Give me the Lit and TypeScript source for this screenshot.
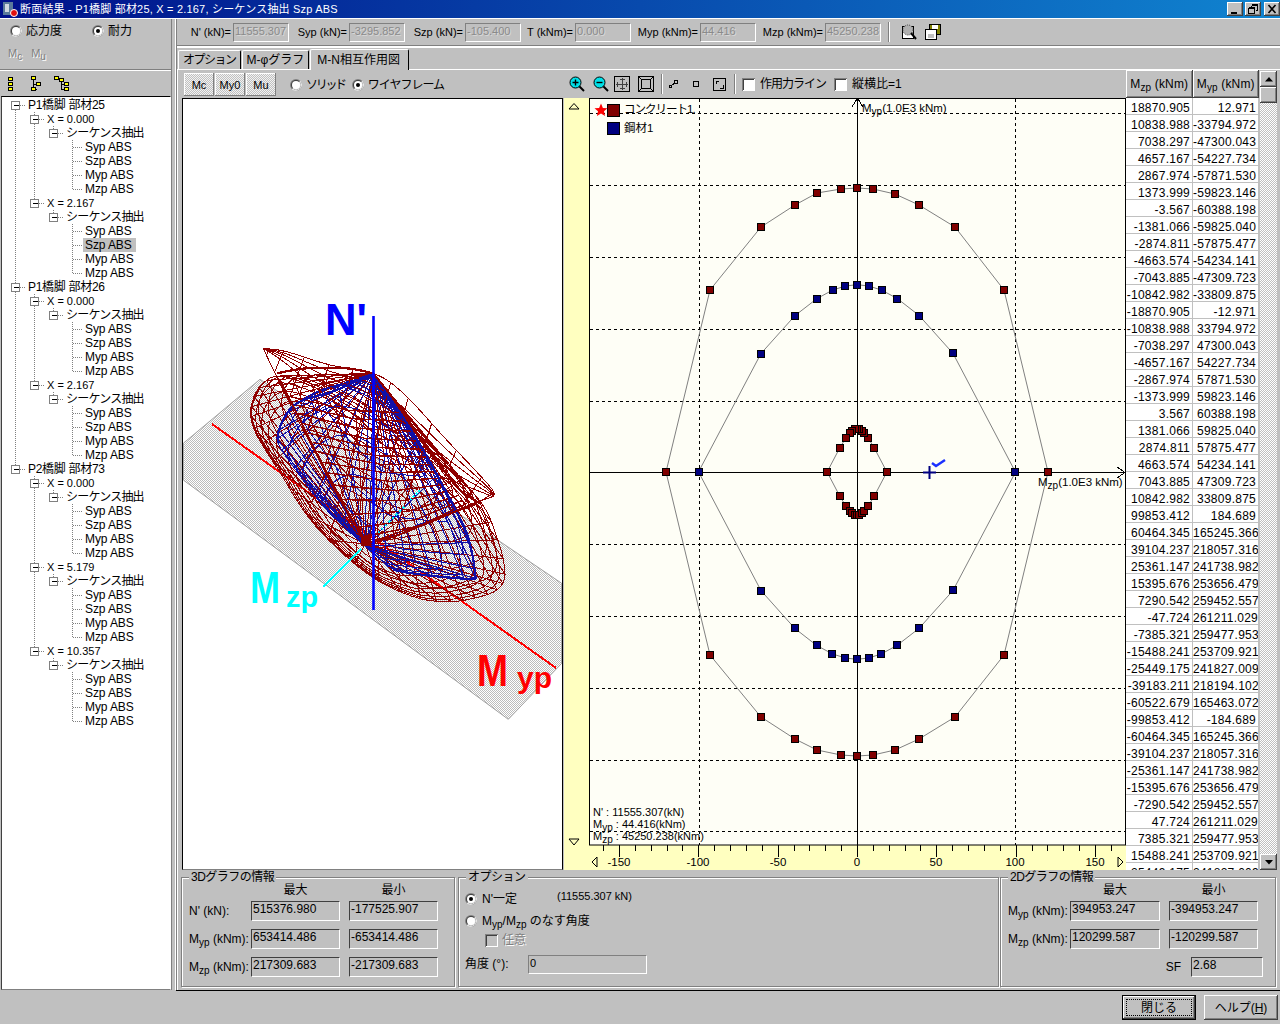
import { LitElement, html, css, svg } from "lit";
import { customElement } from "lit/decorators.js";

type Pt = [number, number];
const RAW = `18870.905 12.971
10838.988 -33794.972
7038.297 -47300.043
4657.167 -54227.734
2867.974 -57871.530
1373.999 -59823.146
-3.567 -60388.198
-1381.066 -59825.040
-2874.811 -57875.477
-4663.574 -54234.141
-7043.885 -47309.723
-10842.982 -33809.875
-18870.905 -12.971
-10838.988 33794.972
-7038.297 47300.043
-4657.167 54227.734
-2867.974 57871.530
-1373.999 59823.146
3.567 60388.198
1381.066 59825.040
2874.811 57875.477
4663.574 54234.141
7043.885 47309.723
10842.982 33809.875
99853.412 184.689
60464.345 165245.366
39104.237 218057.316
25361.147 241738.982
15395.676 253656.479
7290.542 259452.557
-47.724 261211.029
-7385.321 259477.953
-15488.241 253709.921
-25449.175 241827.009
-39183.211 218194.102
-60522.679 165463.072
-99853.412 -184.689
-60464.345 165245.366
-39104.237 218057.316
-25361.147 241738.982
-15395.676 253656.479
-7290.542 259452.557
47.724 261211.029
7385.321 259477.953
15488.241 253709.921
25449.175 241827.009`;
const ROWS = RAW.split("\n").map((l) => l.split(" "));
const plot = (r: string[]): Pt => [857 + (parseFloat(r[0]) / 1000) * 1.587, 472 + (parseFloat(r[1]) / 1000) * 0.717];
const INNER: Pt[] = ROWS.slice(0, 24).map(plot);
const half: Pt[] = ROWS.slice(24, 36).map(plot);
const STEEL: Pt[] = [...half, ...half.map(([x, y]) => [1714 - x, 944 - y] as Pt)];
const OUTER: Pt[] = [[1048, 472], [1004, 290], [955, 227], [919, 205], [895, 194], [873, 189], [857, 188], [841, 189], [817, 193], [795, 205], [761, 227], [710, 290], [666, 472], [710, 655], [761, 717], [795, 739], [817, 750], [841, 755], [857, 756], [873, 755], [895, 750], [919, 739], [955, 717], [1004, 655]];

const Z = ([x, y]: Pt): Pt => [180 + x / 3, 290 + y / 3];
const d = (pts: Pt[], closed = false) => "M" + pts.map(([x, y]) => `${x.toFixed(1)} ${y.toFixed(1)}`).join("L") + (closed ? "Z" : "");

function spline(ctrl: Pt[], n: number, closed: boolean): Pt[] {
  const out: Pt[] = [];
  const m = ctrl.length;
  const segs = closed ? m : m - 1;
  const get = (i: number) => (closed ? ctrl[(i + m) % m] : ctrl[Math.max(0, Math.min(m - 1, i))]);
  for (let k = 0; k < n; k++) {
    const f = (k / (closed ? n : n - 1)) * segs;
    const i = Math.min(Math.floor(f), segs - 1);
    const t = f - i;
    const p0 = get(i - 1), p1 = get(i), p2 = get(i + 1), p3 = get(i + 2);
    const c = (a: number, b: number, e: number, g: number) =>
      0.5 * (2 * b + (e - a) * t + (2 * a - 5 * b + 4 * e - g) * t * t + (3 * b - a - 3 * e + g) * t * t * t);
    out.push([c(p0[0], p1[0], p2[0], p3[0]), c(p0[1], p1[1], p2[1], p3[1])]);
  }
  return out;
}

// two cones sharing one ring: apex -> ring -> pinch
function bag(apex: Pt, pinch: Pt, ringCtrl: Pt[], up: number[], down: number[], mers: number): { lat: string; mer: string } {
  const ring = spline(ringCtrl, mers * 4, true);
  const mix = (a: Pt, b: Pt, u: number): Pt => Z([a[0] + (b[0] - a[0]) * u, a[1] + (b[1] - a[1]) * u]);
  let lat = "", mer = "";
  const rowAt = (o: Pt, u: number) => {
    const p: Pt[] = [];
    for (let k = 0; k < ring.length; k += 2) p.push(mix(o, ring[k], u));
    lat += d(p, true);
  };
  up.forEach((u) => rowAt(apex, u));
  down.forEach((u) => rowAt(pinch, u));
  rowAt(pinch, 1);
  for (let k = 0; k < mers; k++) {
    mer += d([Z(apex), Z(ring[k * 4]), Z(pinch)]);
  }
  return { lat, mer };
}

const MAIN_RING: Pt[] = [[215, 350], [240, 290], [300, 258], [420, 300], [560, 380], [720, 470], [890, 620], [950, 740], [975, 850], [950, 900], [880, 925], [800, 935], [700, 920], [560, 850], [400, 700], [290, 530], [225, 420]];
const main3d = bag([580, 250], [555, 762], MAIN_RING, [0.4, 0.6, 0.75, 0.86, 0.94], [0.35, 0.55, 0.68, 0.78, 0.85, 0.91, 0.96], 36);
const BLUE_RING: Pt[] = [[298, 420], [350, 340], [470, 290], [600, 340], [700, 440], [790, 590], [860, 740], [885, 850], [870, 866], [740, 856], [640, 838], [560, 770], [440, 660], [340, 530], [295, 460]];
const blue3d = bag([580, 250], [555, 768], BLUE_RING, [0.5, 0.72, 0.88], [0.45, 0.7, 0.88], 22);

const FLAP_T = spline([[250, 175], [320, 185], [450, 225], [580, 250], [670, 310], [800, 450], [930, 590], [940, 620]], 40, false);
const FLAP_B = spline([[250, 175], [290, 260], [380, 440], [480, 620], [550, 745], [700, 712], [880, 640], [940, 620]], 40, false);
function flapPaths() {
  let rib = "", lon = "";
  for (let i = 2; i < 40; i += 3) rib += d([Z(FLAP_T[i]), Z(FLAP_B[i])]);
  for (const v of [0, 0.08, 0.16, 0.26, 0.38, 1]) {
    const p: Pt[] = [];
    for (let i = 0; i < 40; i++) p.push(Z([FLAP_T[i][0] + (FLAP_B[i][0] - FLAP_T[i][0]) * v, FLAP_T[i][1] + (FLAP_B[i][1] - FLAP_T[i][1]) * v]));
    lon += d(p);
  }
  let ladder = "";
  const L = spline([[310, 300], [380, 420], [450, 560], [545, 740]], 15, false);
  const R = spline([[650, 350], [720, 470], [790, 570], [860, 640]], 15, false);
  for (let i = 1; i < 15; i++) ladder += d([Z(L[i]), Z([(L[i][0] + R[i][0]) / 2 + 15, (L[i][1] + R[i][1]) / 2 + 18]), Z(R[i])]);
  return { rib, lon, ladder };
}
const flap = flapPaths();

const THICK_RED = [
  [[290, 250], [380, 235], [500, 235], [580, 250]],
  [[300, 270], [380, 430], [470, 610], [555, 750]],
  [[580, 250], [650, 340], [740, 470], [830, 590], [900, 640]],
  [[885, 640], [740, 700], [640, 740], [555, 760]],
  [[240, 290], [215, 350], [225, 420], [290, 530]],
] as Pt[][];
const THICK_BLUE = [
  [[580, 250], [700, 430], [790, 590], [860, 730], [885, 850], [870, 866], [740, 856], [640, 840]],
  [[580, 250], [470, 300], [350, 340], [300, 410], [295, 460]],
] as Pt[][];

const PLANE: Pt[] = [[10, 460], [240, 268], [1145, 880], [1145, 1120], [985, 1288], [10, 570]];

function view3d() {
  const sp = (p: Pt[]) => d(spline(p, p.length * 6, false).map(Z));
  return svg`<svg class="v3" width="381" height="772" viewBox="182 98 381 772">
    <defs><pattern id="dots" width="2" height="2" patternUnits="userSpaceOnUse">
      <rect width="2" height="2" fill="#fff"/><rect width="1" height="1" fill="#bcbcbc"/><rect x="1" y="1" width="1" height="1" fill="#bcbcbc"/>
    </pattern></defs>
    <rect x="182" y="98" width="381" height="772" fill="#fff"/>
    <path d="${d(PLANE.map(Z), true)}" fill="url(#dots)" stroke="#a0a0a0"/>
    <g fill="none" shape-rendering="crispEdges">
      <line x1="212" y1="424" x2="556" y2="668" stroke="#ff0000" stroke-width="2"/>
      <g stroke="#8f0000" stroke-width="1"><path d="${main3d.lat}"/><path d="${main3d.mer}"/></g>
      <g stroke="#1010a8" stroke-width="1"><path d="${blue3d.lat}"/><path d="${blue3d.mer}"/></g>
      <g stroke="#8f0000" stroke-width="1"><path d="${flap.rib}"/><path d="${flap.lon}"/></g>
      <path d="${flap.ladder}" stroke="#8f0000" stroke-width="1.4"/>
      ${THICK_BLUE.map((p) => svg`<path d="${sp(p)}" stroke="#1010a8" stroke-width="2.2"/>`)}
      ${THICK_RED.map((p) => svg`<path d="${sp(p)}" stroke="#8f0000" stroke-width="2.2"/>`)}
      <line x1="410" y1="500" x2="420" y2="490" stroke="#00ffff" stroke-width="1.5" stroke-dasharray="2 2"/>
      <line x1="378" y1="533" x2="405" y2="506" stroke="#00ffff" stroke-width="1.5" stroke-dasharray="2 3"/>
      <line x1="323" y1="587" x2="361" y2="549" stroke="#00ffff" stroke-width="2"/>
    </g>
    <rect x="361" y="536" width="10" height="10" fill="#8f0000"/>
    <line x1="373.500" y1="316" x2="373.500" y2="610" stroke="#0000ff" stroke-width="2.600"/>
    <text x="325" y="335" class="big" fill="#0000ff" textLength="42" lengthAdjust="spacingAndGlyphs">N'</text>
    <text x="250" y="603" class="big" fill="#00ffff" textLength="30" lengthAdjust="spacingAndGlyphs">M</text>
    <text x="286" y="607" class="mid" fill="#00ffff" textLength="32" lengthAdjust="spacingAndGlyphs">zp</text>
    <text x="477" y="686" class="big" fill="#ff0000" textLength="31" lengthAdjust="spacingAndGlyphs">M</text>
    <text x="517" y="688" class="mid" fill="#ff0000" textLength="35" lengthAdjust="spacingAndGlyphs">yp</text>
  </svg>`;
}

function view2d() {
  const hs = [113, 185, 257, 329, 401, 544, 616, 688, 760, 831];
  const ticks: unknown[] = [];
  for (let k = -16; k <= 16; k++) {
    const x = Math.round(857 + k * 15.87) + 0.5;
    if (x < 590 || x > 1124) continue;
    const major = k % 5 === 0;
    ticks.push(svg`<line x1="${x}" y1="845" x2="${x}" y2="${major ? 857 : 851}" stroke="#000"/>`);
  }
  const labels = [[-150, 619], [-100, 698], [-50, 778], [0, 857], [50, 936], [100, 1015], [150, 1095]];
  const mark = (p: Pt[], fill: string) =>
    p.map(([x, y]) => svg`<rect x="${Math.round(x) - 3.5}" y="${Math.round(y) - 3.5}" width="7" height="7" fill="${fill}" stroke="#000"/>`);
  return svg`<svg class="v2" width="562" height="772" viewBox="564 98 562 772">
    <rect x="564" y="98" width="562" height="772" fill="#ffffc0"/>
    <rect x="589.500" y="98.500" width="536" height="746.500" fill="#fefef6" stroke="#000"/>
    <g stroke="#000" stroke-dasharray="3 3" fill="none" shape-rendering="crispEdges">
      ${hs.map((y) => svg`<line x1="590" y1="${y + 0.5}" x2="1125" y2="${y + 0.5}"/>`)}
      <line x1="699.500" y1="99" x2="699.500" y2="845"/>
      <line x1="1015.500" y1="99" x2="1015.500" y2="845"/>
    </g>
    <g stroke="#000" fill="none" shape-rendering="crispEdges">
      <line x1="857.500" y1="98" x2="857.500" y2="845"/>
      <line x1="590" y1="472.500" x2="1125" y2="472.500"/>
    </g>
    <path d="M852 107L857.500 98L863 107M1117 467L1125 472.500L1117 478" fill="none" stroke="#000" shape-rendering="crispEdges"/>
    <g fill="none" stroke="#808080">
      <path d="${d(OUTER, true)}"/><path d="${d(STEEL, true)}"/><path d="${d(INNER, true)}"/>
    </g>
    <g shape-rendering="crispEdges">
      ${mark(OUTER, "#800000")}${mark(STEEL, "#000080")}${mark(INNER, "#800000")}
    </g>
    <path d="M923 472.500H936M929.500 466V479" stroke="#000080" stroke-width="2"/>
    <path d="M932 463L936 466L945 460" stroke="#1a30ff" stroke-width="2.400" fill="none"/>
    <rect x="607.500" y="104.500" width="12" height="12" fill="#800000" stroke="#000"/>
    <rect x="607.500" y="122.500" width="12" height="12" fill="#000080" stroke="#000"/>
    <path d="M601 103.500l1.900 4.400 4.600.400-3.500 3 1.100 4.700-4.100-2.500-4.100 2.500 1.100-4.700-3.500-3 4.600-.400z" fill="#ff0000"/>
    <g class="gt">
      <text x="624" y="113" style="letter-spacing:-1px">コンクリート1.</text>
      <text x="624" y="132">鋼材1</text>
      <text x="862" y="112">M<tspan dy="3" font-size="10">yp</tspan><tspan dy="-3">(1.0E3 kNm)</tspan></text>
      <text x="1038" y="486">M<tspan dy="3" font-size="10">zp</tspan><tspan dy="-3">(1.0E3 kNm)</tspan></text>
      <g class="sm">
        <text x="593" y="816">N' : 11555.307(kN)</text>
        <text x="593" y="828">M<tspan dy="3" font-size="10">yp</tspan><tspan dy="-3"> : 44.416(kNm)</tspan></text>
        <text x="593" y="840">M<tspan dy="3" font-size="10">zp</tspan><tspan dy="-3"> : 45250.238(kNm)</tspan></text>
      </g>
      ${labels.map(([v, x]) => svg`<text x="${x}" y="866" text-anchor="middle">${v === 0 ? "0" : v < 0 ? "-" + -v : v}</text>`)}
    </g>
    <g shape-rendering="crispEdges">${ticks}</g>
    <path d="M569 109H579L574 103.500ZM569 839H579L574 845ZM597 857V867L592 862ZM1118 857V867L1123 862Z" fill="none" stroke="#000"/>
  </svg>`;
}

const sub = (m: string, s: string, r = "") => html`<span>${m}<sub>${s}</sub>${r}</span>`;

interface Node { label: string; kids?: Node[] }
const leaves = (): Node[] => ["Syp ABS", "Szp ABS", "Myp ABS", "Mzp ABS"].map((label) => ({ label }));
const xnode = (label: string): Node => ({ label, kids: [{ label: "シーケンス抽出", kids: leaves() }] });
const TREE: Node[] = [
  { label: "P1橋脚 部材25", kids: [xnode("X = 0.000"), xnode("X = 2.167")] },
  { label: "P1橋脚 部材26", kids: [xnode("X = 0.000"), xnode("X = 2.167")] },
  { label: "P2橋脚 部材73", kids: [xnode("X = 0.000"), xnode("X = 5.179"), xnode("X = 10.357")] },
];
interface Row { label: string; level: number; guides: boolean[]; hasKids: boolean; last: boolean; sel: boolean }
const flat: Row[] = [];
const walk = (ns: Node[], level: number, guides: boolean[]) =>
  ns.forEach((n, i) => {
    const last = i === ns.length - 1;
    flat.push({ label: n.label, level, guides, hasKids: !!n.kids, last, sel: false });
    if (n.kids) walk(n.kids, level + 1, [...guides, !last]);
  });
walk(TREE, 0, []);
flat[10].sel = true;

function treeGutter(r: Row) {
  const w = 5 + (r.level + 1) * 19;
  const cx = 13.5 + r.level * 19;
  return svg`<svg class="gut" width="${w}" height="14" shape-rendering="crispEdges">
    <g stroke="#808080" stroke-dasharray="1 1" fill="none">
      ${r.guides.map((g, i) => (g ? svg`<line x1="${13.5 + i * 19}" y1="0" x2="${13.5 + i * 19}" y2="14"/>` : ""))}
      <line x1="${cx}" y1="${flat[0] === r ? 6 : 0}" x2="${cx}" y2="${r.last ? 7 : 14}"/>
      <line x1="${cx}" y1="7.500" x2="${cx + 9}" y2="7.500"/>
    </g>
    ${r.hasKids
      ? svg`<rect x="${cx - 4}" y="3.500" width="8" height="8" fill="#fff" stroke="#808080"/><line x1="${cx - 2}" y1="7.500" x2="${cx + 3}" y2="7.500" stroke="#000"/>`
      : ""}
  </svg>`;
}

const radio = (on: boolean) => svg`<svg class="rd" width="12" height="12" viewBox="0 0 12 12">
  <circle cx="6" cy="6" r="6" fill="#808080"/><path d="M10.240 1.760A6 6 0 0 1 1.760 10.240Z" fill="#fff"/>
  <circle cx="6" cy="6" r="5" fill="#404040"/><path d="M9.540 2.460A5 5 0 0 1 2.460 9.540Z" fill="#d8d8d8"/>
  <circle cx="6" cy="6" r="4" fill="#fff"/>${on ? svg`<circle cx="6" cy="6" r="2" fill="#000"/>` : ""}</svg>`;

const check = (dis = false) => svg`<svg class="ck" width="13" height="13" viewBox="0 0 13 13" shape-rendering="crispEdges">
  <rect width="13" height="13" fill="#fff"/><path d="M0.500 12.500V0.500H12.500" fill="none" stroke="#808080"/>
  <path d="M1.500 11.500V1.500H11.500" fill="none" stroke="#404040"/><rect x="2" y="2" width="10" height="10" fill="${dis ? "#c0c0c0" : "#fff"}"/></svg>`;

const mag = (plus: boolean) => svg`<svg width="16" height="16" viewBox="0 0 16 16">
  <path d="M9.500 9.500L15 15" stroke="#000" stroke-width="2"/><circle cx="6.500" cy="6.500" r="5.500" fill="#00e0e8" stroke="#000"/>
  <path d="M3.500 6.500H9.500${plus ? "M6.500 3.500V9.500" : ""}" stroke="#000" stroke-width="1.400"/></svg>`;

const yb = (x: number, y: number) => svg`<rect x="${x + 0.5}" y="${y + 0.5}" width="4" height="3" fill="#ffff00" stroke="#000"/>`;

@customElement("app-root")
export class AppRoot extends LitElement {
  static styles = css`
    :host { display: block; width: 1280px; height: 1024px; background: #c0c0c0; overflow: hidden; color: #000;
      font: 12px/14px "Liberation Sans", "Noto Sans CJK JP", sans-serif; }
    sub { font-size: 10px; line-height: 0; vertical-align: -3px; }
    u { text-decoration: underline; }
    svg { display: block; flex: none; }
    .title { height: 18px; display: flex; align-items: center; color: #fff; background: linear-gradient(90deg, #00108a, #1084d0); padding-left: 2px; gap: 2px; white-space: pre; }
    .title span { flex: 1; font-size: 11px; letter-spacing: 0.2px; }
    .wb { width: 16px; height: 14px; background: #c0c0c0; box-shadow: inset -1px -1px #404040, inset 1px 1px #fff, inset -2px -2px #808080; }
    .wb.gap { margin-right: 1px; }
    .body { display: flex; height: 972px; border-top: 1px solid #fff; box-sizing: border-box; }
    .left { width: 171px; border-right: 1px solid #808080; display: flex; flex-direction: column; }
    .lradios { height: 29px; display: flex; align-items: center; padding: 0 0 5px 10px; box-sizing: border-box; }
    .lradios label { display: flex; align-items: center; gap: 4px; }
    .lradios label + label { margin-left: 30px; }
    .ml { height: 23px; margin-top: -2px; display: flex; gap: 9px; padding-left: 8px; color: #808080; text-shadow: 1px 1px #fff; font-size: 11px; }
    .sep { height: 0; border-top: 1px solid #808080; border-bottom: 1px solid #fff; }
    .ltools { height: 25px; display: flex; padding: 5px 0 0 8px; box-sizing: border-box; }
    .tree { flex: 1; margin-left: 1px; background: #fff; border-top: 1px solid #000; border-left: 1px solid #404040; border-right: 1px solid #fff; border-bottom: 1px solid #808080; overflow: hidden; padding-top: 1px; }
    .tr { display: flex; height: 14px; align-items: center; white-space: pre; }
    .tr span { padding: 0 1px 0 2px; height: 14px; line-height: 15px; }
    .tr .sel { background: #c0c0c0; padding-right: 4px; }
    .l0 { letter-spacing: -0.3px; }
    .l1 { font-size: 11px; }
    .l2 { letter-spacing: -0.8px; }
    .l3 { letter-spacing: -0.1px; }
    .split { width: 4px; border-right: 1px solid #fff; box-sizing: border-box; }
    .right { flex: 1; min-width: 0; border-left: 1px solid #808080; display: flex; flex-direction: column; }
    .fields { height: 27px; display: flex; align-items: center; font-size: 11px; box-sizing: border-box; }
    .fl { text-align: right; padding-right: 2px; white-space: nowrap; box-sizing: border-box; }
    .in { box-sizing: border-box; height: 19px; font-size: 11px; line-height: 13px; padding: 1px 0 0 1px; border: 1px solid; border-color: #808080 #fff #fff #808080; overflow: hidden; white-space: nowrap; }
    .in.dis { width: 56px; color: #8a8a8a; text-shadow: 1px 1px #d8d8d8; }
    .vsep { width: 0; height: 20px; margin-left: 7px; border-left: 1px solid #808080; border-right: 1px solid #fff; }
    .tabs { height: 22px; display: flex; align-items: flex-end; padding-left: 1px; border-top: 1px solid #fff; box-sizing: border-box; }
    .tab { height: 19px; padding: 2px 4px 0; box-sizing: border-box; border: 1px solid #fff; border-right-color: #000; border-bottom: 0; border-radius: 2px 2px 0 0; margin-right: 1px; white-space: nowrap; }
    .tab.t1 { letter-spacing: -1.5px; }
    .tab.on { height: 21px; padding: 3px 8px 0 6px; background: #c0c0c0; margin-bottom: -1px; z-index: 1; }
    .pane { border-top: 1px solid #fff; border-left: 1px solid #fff; display: flex; flex-direction: column; }
    .cols { display: flex; padding-left: 4px; }
    .c3 { width: 382px; flex: none; }
    .c2 { width: 562px; flex: none; }
    .ct { width: 133px; flex: none; }
    .cs { width: 17px; flex: none; margin-left: 1px; margin-top: 1px; display: flex; flex-direction: column; }
    .hd { height: 28px; display: flex; align-items: center; box-sizing: border-box; }
    .c3 .hd { padding: 1px 0 0 2px; }
    .dth { width: 30px; height: 23px; margin-right: 1px; display: flex; align-items: center; justify-content: center; font-size: 11px; box-shadow: inset -1px -1px #808080, inset 1px 1px #fff; background: repeating-conic-gradient(#f2f2f2 0 25%, #c0c0c0 0 50%) 0 0 / 2px 2px; }
    .opt { display: flex; align-items: center; gap: 4px; white-space: nowrap; }
    .ls1 { letter-spacing: -1px; }
    .ls2 { letter-spacing: -2.3px; }
    .frame3 { border: 1px solid; border-color: #000 #000 #808080 #000; width: 381px; height: 772px; box-sizing: border-box; overflow: hidden; }
    .v3 { margin: -1px; }
    svg .big { font: bold 44px "Liberation Sans", sans-serif; }
    svg .mid { font: bold 29px "Liberation Sans", sans-serif; }
    .gt text { font: 11.500px "Liberation Sans", "Noto Sans CJK JP", sans-serif; }
    .gt .sm text { font-size: 11px; }
    .gt tspan { font-family: "Liberation Sans", sans-serif; }
    .c2 .hd { padding-left: 5px; }
    .hdt { display: flex; height: 28px; }
    .th { flex: 1; display: flex; align-items: center; justify-content: center; box-shadow: inset -1px -1px #404040, inset 1px 1px #fff, inset -2px -2px #808080; white-space: pre; letter-spacing: 0.15px; }
    .tbl { height: 772px; overflow: hidden; background: #fff; }
    .trw { display: flex; height: 17px; box-sizing: border-box; border-bottom: 1px solid #c0c0c0; }
    .td { box-sizing: border-box; width: 67px; border-right: 1px solid #c0c0c0; text-align: right; padding-right: 2px; letter-spacing: 0.25px; line-height: 20px; overflow: hidden; white-space: nowrap; }
    .td + .td { width: 66px; }
    .sb { height: 16px; flex: none; background: #c0c0c0; box-shadow: inset -1px -1px #404040, inset 1px 1px #fff, inset -2px -2px #808080; display: flex; align-items: center; justify-content: center; }
    .trk { flex: 1; background: repeating-conic-gradient(#fff 0 25%, #c0c0c0 0 50%) 0 0 / 2px 2px; }
    .groups { display: flex; height: 120px; padding: 7px 0 3px 3px; box-sizing: border-box; gap: 3px; }
    .gb { position: relative; border: 1px solid #808080; box-shadow: inset 1px 1px #fff, 1px 1px #fff; box-sizing: border-box; height: 110px; }
    .gb > b { position: absolute; top: -7px; left: 7px; font-weight: normal; background: #c0c0c0; padding: 0 2px; white-space: nowrap; line-height: 13px; letter-spacing: -0.5px; }
    .g3 { width: 274px; padding: 6px 0 0 7px; }
    .g2 { width: 276px; margin-left: -2px; padding: 6px 0 0 7px; }
    .go { width: 541px; padding: 14px 0 0 6px; }
    .grid { display: grid; column-gap: 9px; align-items: center; }
    .g3 .grid { grid-template-columns: 53px 89px 89px; grid-auto-rows: 19px; row-gap: 9px; }
    .g2 .grid { grid-template-columns: 53px 90px 89px; grid-auto-rows: 19px; row-gap: 9px; }
    .gc { text-align: center; }
    .grid.hdr { grid-auto-rows: 12px; line-height: 12px; margin-bottom: 5px; }
    .grid .in { height: 20px; font-size: 12px; border-color: #404040 #fff #fff #404040; }
    .nw { white-space: pre; }
    .sf { display: flex; justify-content: flex-end; align-items: center; gap: 10px; margin-top: 9px; padding-right: 12px; }
    .sf .in { width: 72px; height: 20px; font-size: 12px; border-color: #404040 #fff #fff #404040; }
    .row { display: flex; align-items: center; height: 14px; white-space: pre; }
    .mt { margin-top: 8px; }
    .mts { margin-top: 5px; }
    .mtt { margin-top: 10px; }
    .foot { height: 34px; box-sizing: border-box; border-top: 1px solid #000; margin-left: 176px; }
    .footin { height: 34px; margin-top: -34px; display: flex; justify-content: flex-end; align-items: flex-start; gap: 8px; padding: 5px 2px 0 0; }
    .btn { width: 74px; height: 25px; box-sizing: border-box; background: #c0c0c0; display: flex; align-items: center; justify-content: center; box-shadow: inset -1px -1px #404040, inset 1px 1px #fff, inset -2px -2px #808080; }
    .btn.def { border: 1px solid #000; outline: 1px dotted #000; outline-offset: -5px; }
    .dis2 { color: #808080; text-shadow: 1px 1px #fff; }
    .s11 { font-size: 11px; }
    .inang { width: 119px; }
  `;

  render() {
    const f = (label: unknown, w: number, v: string) => html`<div class="fl" style="width:${w}px">${label}</div><div class="in dis">${v}</div>`;
    return html`
      <div class="title">
        <svg width="16" height="16" viewBox="0 0 16 16"><rect x="1" y="1" width="10" height="13" fill="#5a7a9a"/><rect x="3" y="3" width="4" height="8" fill="#d0d8e0"/><circle cx="12" cy="12" r="3.500" fill="#e01010" stroke="#fff"/></svg>
        <span>断面結果 - P1橋脚 部材25, X = 2.167, シーケンス抽出 Szp ABS</span>
        <div class="wb"><svg width="16" height="14"><rect x="4" y="10" width="6" height="2"/></svg></div>
        <div class="wb gap"><svg width="16" height="14" fill="none" stroke="#000" shape-rendering="crispEdges"><path d="M6.500 3.500H12.500V8.500H10.500M6.500 2.500H12.500M3.500 6.500H9.500V11.500H3.500ZM3.500 5.500H9.500M6.500 3.500V5.500"/></svg></div>
        <div class="wb"><svg width="16" height="14"><path d="M4.500 3L11.500 11M11.500 3L4.500 11" stroke="#000" stroke-width="1.600"/></svg></div>
      </div>
      <div class="body">
        <div class="left">
          <div class="lradios">
            <label>${radio(false)}<span>応力度</span></label>
            <label>${radio(true)}<span>耐力</span></label>
          </div>
          <div class="ml"><span>M<sub>c</sub></span><span>M<sub>u</sub></span></div>
          <div class="sep"></div>
          <div class="ltools">
            <svg width="5" height="16" shape-rendering="crispEdges">${yb(0, 1)}${yb(0, 6)}${yb(0, 11)}</svg>
            <div style="width:18px"></div>
            <svg width="10" height="16" shape-rendering="crispEdges"><path d="M2.500 3V14M2.500 8.500H6M2.500 13.500H6" stroke="#000"/>${yb(0, 0)}${yb(5, 6)}${yb(0, 11)}</svg>
            <div style="width:13px"></div>
            <svg width="15" height="16" shape-rendering="crispEdges"><path d="M3 2H7V14M7 8.500H10M7 13.500H10" stroke="#000" fill="none"/>${yb(0, 0)}${yb(5, 2)}${yb(10, 6)}${yb(10, 11)}</svg>
          </div>
          <div class="tree">
            ${flat.map((r) => html`<div class="tr">${treeGutter(r)}<span class="${r.sel ? "sel " : ""}l${r.level}">${r.label}</span></div>`)}
          </div>
        </div>
        <div class="split"></div>
        <div class="right">
          <div class="fields">
            ${f("N' (kN)=", 56, "11555.307")}${f("Syp (kN)=", 60, "-3295.852")}${f("Szp (kN)=", 60, "-105.400")}
            ${f("T (kNm)=", 54, "0.000")}${f("Myp (kNm)=", 69, "44.416")}${f("Mzp (kNm)=", 69, "45250.238")}
            <div class="vsep"></div>
            <div style="width:10px"></div>
            <svg width="18" height="18" viewBox="0 0 18 18"><rect x="2.500" y="3.500" width="11" height="12" fill="#fff" stroke="#000"/><circle cx="8" cy="7" r="5" fill="#b0b0b0" stroke="#404040" stroke-dasharray="1 1"/><path d="M11 10L16 16" stroke="#000" stroke-width="2"/></svg>
            <div style="width:7px"></div>
            <svg width="16" height="16" viewBox="0 0 16 16" shape-rendering="crispEdges"><rect x="4.500" y="0.500" width="11" height="10" fill="#808000" stroke="#000"/><rect x="7" y="1" width="6" height="4" fill="#fff"/><rect x="0.500" y="5.500" width="11" height="10" fill="#fff" stroke="#000"/><rect x="3" y="10" width="6" height="4" fill="#c0c0c0"/></svg>
          </div>
          <div class="sep"></div>
          <div class="tabs">
            <div class="tab t1">オプション</div>
            <div class="tab">M-φグラフ</div>
            <div class="tab on">M-N相互作用図</div>
          </div>
          <div class="pane">
            <div class="cols">
              <div class="c3">
                <div class="hd">
                  <div class="dth">Mc</div><div class="dth">My0</div><div class="dth">Mu</div>
                  <div style="width:13px"></div>
                  <div class="opt">${radio(false)}<span class="ls2">ソリッド</span></div>
                  <div style="width:7px"></div>
                  <div class="opt">${radio(true)}<span class="ls1">ワイヤフレーム</span></div>
                </div>
                <div class="frame3">${view3d()}</div>
              </div>
              <div class="c2">
                <div class="hd">
                  ${mag(true)}<div style="width:8px"></div>${mag(false)}<div style="width:5px"></div>
                  <svg width="16" height="16" shape-rendering="crispEdges" fill="none" stroke="#000"><rect x="0.500" y="0.500" width="15" height="15"/><path d="M8 2V14M2 8H14M5.500 3.500H10.500M5.500 12.500H10.500M3.500 5.500V10.500M12.500 5.500V10.500" stroke="#404040"/></svg>
                  <div style="width:8px"></div>
                  <svg width="16" height="16" shape-rendering="crispEdges" fill="none" stroke="#000"><rect x="0.500" y="0.500" width="15" height="15"/><rect x="3.500" y="3.500" width="9" height="9"/><path d="M1 1L3 3M15 1L13 3M1 15L3 13M15 15L13 13"/></svg>
                  <div class="vsep"></div>
                  <div style="width:6px"></div>
                  <svg width="9" height="9" shape-rendering="crispEdges" fill="none" stroke="#000"><rect x="0.500" y="5.500" width="2" height="2"/><rect x="5.500" y="0.500" width="3" height="3"/><path d="M3 5L6 3"/></svg>
                  <div style="width:15px"></div>
                  <svg width="7" height="7" shape-rendering="crispEdges" fill="none" stroke="#000"><rect x="0.500" y="0.500" width="5" height="5"/></svg>
                  <div style="width:13px"></div>
                  <svg width="13" height="13" shape-rendering="crispEdges" fill="none" stroke="#000"><rect x="0.500" y="0.500" width="12" height="12"/><path d="M3 6V3H6M7 10H10V7"/></svg>
                  <div class="vsep" style="margin-left:8px"></div>
                  <div style="width:6px"></div>
                  <div class="opt">${check()}<span class="ls1" style="margin-left:1px">作用力ライン</span></div>
                  <div style="width:8px"></div>
                  <div class="opt">${check()}<span style="margin-left:1px">縦横比=1</span></div>
                </div>
                ${view2d()}
              </div>
              <div class="ct">
                <div class="hdt"><div class="th">${sub("M", "zp", " (kNm)")}</div><div class="th">${sub("M", "yp", " (kNm)")}</div></div>
                <div class="tbl">
                  ${ROWS.map((r) => html`<div class="trw"><div class="td">${r[0]}</div><div class="td">${r[1]}</div></div>`)}
                </div>
              </div>
              <div class="cs">
                <div class="sb"><svg width="8" height="5"><path d="M0 4.500H8L4 0Z"/></svg></div>
                <div class="sb"></div>
                <div class="trk"></div>
                <div class="sb"><svg width="8" height="5"><path d="M0 0H8L4 4.500Z"/></svg></div>
              </div>
            </div>
            <div class="groups">
              <div class="gb g3"><b>3Dグラフの情報</b>
                <div class="grid hdr"><span></span><span class="gc">最大</span><span class="gc">最小</span></div>
                <div class="grid">
                  <span class="nw">N' (kN):</span><div class="in">515376.980</div><div class="in">-177525.907</div>
                  <span class="nw">${sub("M", "yp", " (kNm):")}</span><div class="in">653414.486</div><div class="in">-653414.486</div>
                  <span class="nw">${sub("M", "zp", " (kNm):")}</span><div class="in">217309.683</div><div class="in">-217309.683</div>
                </div>
              </div>
              <div class="gb go"><b>オプション</b>
                <div class="row" style="gap:5px">${radio(true)}<span>N'一定</span><span class="s11" style="margin-left:35px;margin-top:-7px">(11555.307 kN)</span></div>
                <div class="row mt" style="gap:5px">${radio(false)}<span>${sub("M", "yp", "/")}${sub("M", "zp", " のなす角度")}</span></div>
                <div class="row mts" style="gap:4px;padding-left:20px">${check(true)}<span class="dis2">任意</span></div>
                <div class="row mtt"><span style="width:63px">角度 (°):</span><div class="in inang">0</div></div>
              </div>
              <div class="gb g2"><b>2Dグラフの情報</b>
                <div class="grid hdr"><span></span><span class="gc">最大</span><span class="gc">最小</span></div>
                <div class="grid">
                  <span class="nw">${sub("M", "yp", " (kNm):")}</span><div class="in">394953.247</div><div class="in">-394953.247</div>
                  <span class="nw">${sub("M", "zp", " (kNm):")}</span><div class="in">120299.587</div><div class="in">-120299.587</div>
                </div>
                <div class="sf"><span>SF</span><div class="in">2.68</div></div>
              </div>
            </div>
          </div>
        </div>
      </div>
      <div class="foot"></div>
      <div class="footin">
        <div class="btn def">閉じる</div>
        <div class="btn"><span>ヘルプ(<u>H</u>)</span></div>
      </div>
    `;
  }
}
